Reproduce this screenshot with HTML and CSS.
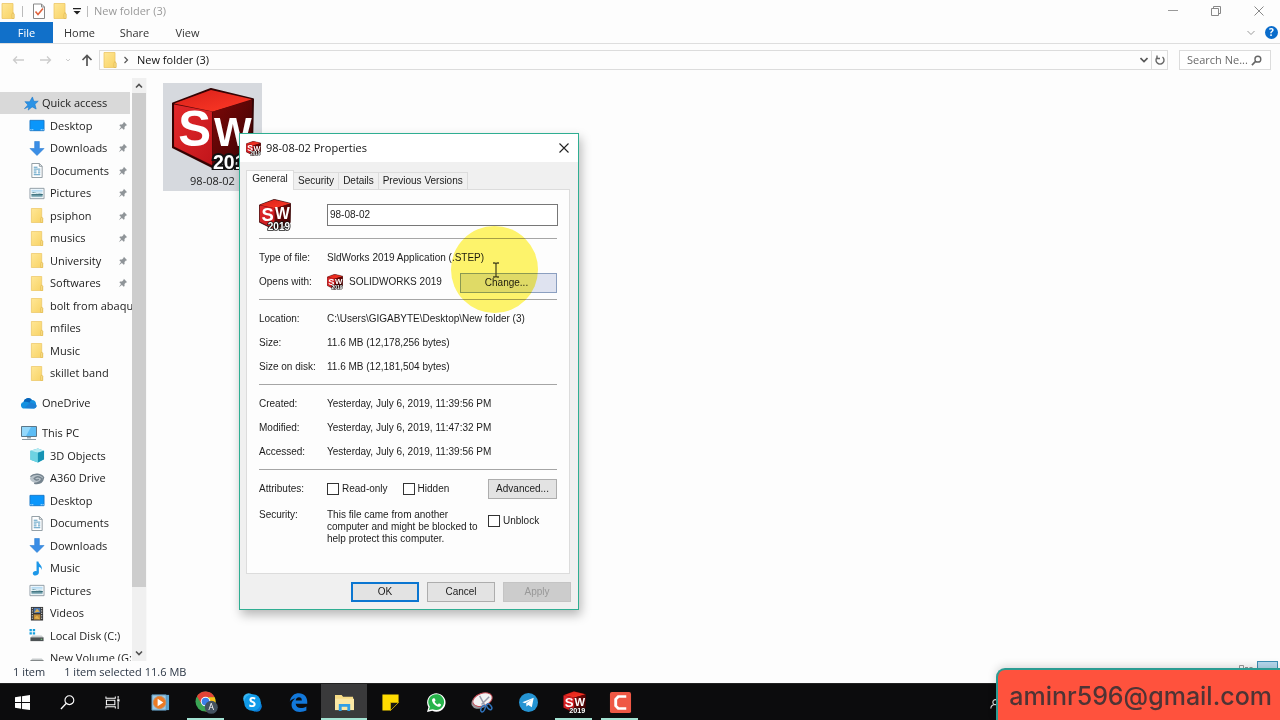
FILE: index.html
```html
<!DOCTYPE html>
<html lang="en">
<head>
<meta charset="utf-8">
<title>New folder (3)</title>
<link rel="stylesheet" href="styles.css">
</head>
<body>
<svg class="defs" aria-hidden="true">
  <linearGradient id="g-folder" x1="0" y1="0" x2="1" y2="1"><stop offset="0" stop-color="#ffe796"/><stop offset="1" stop-color="#f8d264"/></linearGradient>
  <linearGradient id="g-top" x1="0" y1="0" x2="1" y2="1"><stop offset="0" stop-color="#d8201a"/><stop offset="1" stop-color="#ff3a26"/></linearGradient>
  <linearGradient id="g-left" x1="0" y1="0" x2="1" y2="1"><stop offset="0" stop-color="#e3292b"/><stop offset="1" stop-color="#c1151b"/></linearGradient>
  <linearGradient id="g-right" x1="0" y1="0" x2="1" y2="1"><stop offset="0" stop-color="#7c0808"/><stop offset="1" stop-color="#3c0303"/></linearGradient>
  <linearGradient id="g-photo" x1="0" y1="0" x2="0" y2="1"><stop offset="0" stop-color="#a9d5f3"/><stop offset=".5" stop-color="#e6f3f6"/><stop offset=".55" stop-color="#2f6672"/><stop offset="1" stop-color="#a8cbd6"/></linearGradient>
  <symbol id="folder" viewBox="0 0 16 16"><path d="M2 .5h11v9.500l1 1v4.500H2z" fill="url(#g-folder)" stroke="#ecc766" stroke-width=".8"/><path d="M12 15.500v-4.500l1-1.500 1 1.500v4.500z" fill="#fbe08b" stroke="#e0b850" stroke-width=".7"/></symbol>
  <symbol id="star" viewBox="0 0 16 16"><path d="M9.500 1l1.600 4.700 4.600-.2-3.500 3.400 1.300 5-4.300-2.300L5 15l.6-3.500L1 13.500l3.600-4L1.500 6l5 .2z" fill="#2b93e6" stroke="#1c78c8" stroke-width=".6"/></symbol>
  <symbol id="desktop" viewBox="0 0 16 16"><path d="M.5 2.500h15v11H.5z" fill="#0a96fb" stroke="#1677c9"/><path d="M1 12.500h14" stroke="#fff" stroke-dasharray="1 1 1 8 1 1"/></symbol>
  <symbol id="down" viewBox="0 0 16 16"><path d="M5.500.5h5v7.500h5L8 15.500.5 8h5z" fill="#3b8ee6" stroke="#2679cf" stroke-width=".6"/></symbol>
  <symbol id="doc" viewBox="0 0 16 16"><path d="M2.500.5h8l3 3v12h-11z" fill="#fff" stroke="#8c989f"/><path d="M10.500.5v3h3" fill="none" stroke="#8c989f"/><path d="M4.500 4.500h4M4.500 6.500h7M4.500 8.500h3m1.500 0h2.500M4.500 10.500h3m1.500 0h2.500M4.500 12.500h7" stroke="#4b94bd"/></symbol>
  <symbol id="pic" viewBox="0 0 16 16"><path d="M.5 2.500h15v11H.5z" fill="#fff" stroke="#8d9aa3"/><path d="M2 4h12v8H2z" fill="url(#g-photo)"/><path d="M2 7c3-.5 6 1 12 2.500v-1L9 8 4 6.500z" fill="#2d6472"/></symbol>
  <symbol id="cloud" viewBox="0 0 16 16"><path d="M3.500 13.500A3.300 3.300 0 0 1 2.500 7 4.800 4.800 0 0 1 11 5a4 4 0 0 1 4 4.500 2.500 2.500 0 0 1-2 4z" fill="#1491e0"/><path d="M2.500 7A4.800 4.800 0 0 1 11 5c-1.500.5-2 1.500-2.500 2.800C6.500 6.500 4.500 6.500 2.500 7z" fill="#0a64b8"/><path d="M15 9.500l-6-2-5.500 5.500 9.500.5a2.500 2.500 0 0 0 2-4z" fill="#1d7fd4"/></symbol>
  <symbol id="pc" viewBox="0 0 16 16"><path d="M.5 1.500h15v10H.5z" fill="#5dbdf5" stroke="#5c7788"/><path d="M1 2h9L5 11H1z" fill="#94d8fb"/><path d="M6 12h4v1.500H6z" fill="#9cabb3"/><path d="M1 14.500h14" stroke="#8898a1"/></symbol>
  <symbol id="cube" viewBox="0 0 16 16"><path d="M1 3l8-2.500L15.500 3v9L9 15.500 1 12.500z" fill="#35b5cf"/><path d="M1 3l8 2v10.500L1 12.500z" fill="#6dd3e2"/><path d="M1 3l8-2.500L15.500 3 9 5z" fill="#b6ebf2"/><path d="M9 5l6.500-2v9L9 15.500z" fill="#1593b4"/></symbol>
  <symbol id="a360" viewBox="0 0 16 16"><ellipse cx="7.500" cy="8" rx="7" ry="4.500" fill="#b8c2c9"/><path d="M1 6c4-4 12-3 14 1-1 5-5 7-10 6 4 0 8-2 8-5-3-3-6-2-8 0 1 2 3 2 5 1" fill="none" stroke="#74838e" stroke-width="1.500"/></symbol>
  <symbol id="music" viewBox="0 0 16 16"><path d="M7.500.5h2c.5 3 4.500 4 3.500 9-.5-2-1.500-3-3-3v6c-.5 3.800-6.500 3.800-6.500.8 0-2 2-3 4-2.500z" fill="#1d97e8"/></symbol>
  <symbol id="video" viewBox="0 0 16 16"><path d="M1.500 1h13v14.500h-13z" fill="#373737"/><path d="M3 2v13M13 2v13" stroke="#e9e9e9" stroke-dasharray="1.300 1.300"/><path d="M4.500 2h7v5.500h-7z" fill="#4d76ad"/><path d="M4.500 9h7v5.500h-7z" fill="#c48e37"/><path d="M5 7l3-4 3 3zM5 13l3-3 3 4z" fill="#e4b24e"/></symbol>
  <symbol id="disk" viewBox="0 0 16 16"><path d="M0 1h2.500v2.500H0zM3.500 1H6v2.500H3.500zM0 4.500h2.500V7H0zM3.500 4.500H6V7H3.500z" fill="#16a0df"/><path d="M3 8h10l2 2H1z" fill="#c8cccd"/><path d="M1 10h14v4H1z" fill="#4c5254"/><path d="M12 11.500h1.500v1H12z" fill="#85df8b"/></symbol>
  <symbol id="pin" viewBox="0 0 12 12"><path d="M7 1l4 4-1.500.4-1.700 1.800.1 2.300-1.100.9L1.600 5.200l.9-1.100 2.300.1 1.800-1.700zM3.600 7.300l1.100 1.100L1 11z" fill="#8f9498"/></symbol>
  <symbol id="box" viewBox="0 0 80 80">
    <path d="M1 15L38 1l41 10-1 48-39 18-38-19z" fill="#580606" stroke="#330303" stroke-width="2" stroke-linejoin="round"/>
    <path d="M2 15L38 2l40 9-38 12z" fill="url(#g-top)"/><path d="M2 16l37 7v52L2 57z" fill="url(#g-left)"/><path d="M40 23l38-11-1 47-37 16z" fill="url(#g-right)"/>
  </symbol>
  <symbol id="sw" viewBox="0 0 80 80"><use href="#box" width="80" height="80"/><text x="6" y="54" class="sw-s">S</text><text x="40" y="51" class="sw-w">W</text><text x="22" y="77" class="sw-year">2019</text></symbol>
</svg>

<div class="window">
  <header>
    <div class="titlebar">
      <svg class="i16"><use href="#folder"/></svg><span class="sep"></span>
      <svg class="i16" viewBox="0 0 16 16"><path d="M2.500 1h8l3 3v11.500h-11z" fill="#fff" stroke="#888"/><path d="M10.500 1v3h3" fill="none" stroke="#888"/><path d="M4.500 8.500l2.500 3 5-6" fill="none" stroke="#e0623c" stroke-width="1.600"/></svg>
      <svg class="i16"><use href="#folder"/></svg>
      <svg class="i8" viewBox="0 0 8 8"><path d="M0 1h8v1.300H0zM.5 4h7L4 7.500z" fill="#222"/></svg><span class="sep"></span>
      <span class="title">New folder (3)</span>
      <div class="win-buttons">
        <button aria-label="Minimize"><svg viewBox="0 0 10 10"><path d="M0 4.500h10" stroke="#999"/></svg></button>
        <button aria-label="Restore"><svg viewBox="0 0 10 10"><path d="M.5 2.500h7v7h-7zM2.500 2.500v-2h7v7h-2" fill="none" stroke="#888"/></svg></button>
        <button aria-label="Close"><svg viewBox="0 0 10 10"><path d="M.5.5l9 9M9.500.5l-9 9" stroke="#888"/></svg></button>
      </div>
    </div>
    <nav class="ribbon">
      <button class="file">File</button><button>Home</button><button>Share</button><button>View</button>
      <span class="help"><svg class="i8" viewBox="0 0 8 8"><path d="M.5 2L4 5.500 7.500 2" fill="none" stroke="#999"/></svg><b>?</b></span>
    </nav>
    <div class="address-row">
      <svg class="arrow" viewBox="0 0 12 12"><path d="M12 6H1.500M5 2.500L1.500 6 5 9.500" fill="none" stroke="#ccc" stroke-width="1.300"/></svg>
      <svg class="arrow" viewBox="0 0 12 12"><path d="M0 6h10.500M7 2.500L10.500 6 7 9.500" fill="none" stroke="#ccc" stroke-width="1.300"/></svg>
      <svg class="i8" viewBox="0 0 8 8"><path d="M2 3l2 2 2-2" fill="none" stroke="#ccc"/></svg>
      <svg class="arrow" viewBox="0 0 12 12"><path d="M6 12V1.500M1.500 6L6 1.500 10.500 6" fill="none" stroke="#555" stroke-width="1.700"/></svg>
      <div class="address">
        <svg class="i16"><use href="#folder"/></svg>
        <svg class="i8" viewBox="0 0 8 8"><path d="M2.500 1l3 3-3 3" fill="none" stroke="#555" stroke-width="1.200"/></svg>
        <span class="path">New folder (3)</span>
        <svg class="i8" viewBox="0 0 8 8"><path d="M.5 2L4 5.500 7.500 2" fill="none" stroke="#555" stroke-width="1.600"/></svg>
        <span class="refresh"><svg viewBox="0 0 10 10"><path d="M2.500 2A4 4 0 1 0 7.500 2M2 .5v3h3" fill="none" stroke="#666" stroke-width="1.400"/></svg></span>
      </div>
      <label class="search"><input type="text" placeholder="Search Ne..." aria-label="Search"><svg viewBox="0 0 12 12"><circle cx="7.500" cy="4.500" r="3.200" fill="none" stroke="#666" stroke-width="1.500"/><path d="M5 7L1 11" stroke="#666" stroke-width="1.800"/></svg></label>
    </div>
  </header>

  <main>
    <aside>
      <div class="tree">
        <ul>
          <li class="root quick"><svg class="i14"><use href="#star"/></svg>Quick access</li>
          <li><svg class="i14"><use href="#desktop"/></svg>Desktop<svg class="pin"><use href="#pin"/></svg></li>
          <li><svg class="i14"><use href="#down"/></svg>Downloads<svg class="pin"><use href="#pin"/></svg></li>
          <li><svg class="i14"><use href="#doc"/></svg>Documents<svg class="pin"><use href="#pin"/></svg></li>
          <li><svg class="i14"><use href="#pic"/></svg>Pictures<svg class="pin"><use href="#pin"/></svg></li>
          <li><svg class="i14"><use href="#folder"/></svg>psiphon<svg class="pin"><use href="#pin"/></svg></li>
          <li><svg class="i14"><use href="#folder"/></svg>musics<svg class="pin"><use href="#pin"/></svg></li>
          <li><svg class="i14"><use href="#folder"/></svg>University<svg class="pin"><use href="#pin"/></svg></li>
          <li><svg class="i14"><use href="#folder"/></svg>Softwares<svg class="pin"><use href="#pin"/></svg></li>
          <li><svg class="i14"><use href="#folder"/></svg>bolt from abaqu</li>
          <li><svg class="i14"><use href="#folder"/></svg>mfiles</li>
          <li><svg class="i14"><use href="#folder"/></svg>Music</li>
          <li><svg class="i14"><use href="#folder"/></svg>skillet band</li>
        </ul>
        <ul><li class="root"><svg class="i16"><use href="#cloud"/></svg>OneDrive</li></ul>
        <ul>
          <li class="root"><svg class="i16"><use href="#pc"/></svg>This PC</li>
          <li><svg class="i14"><use href="#cube"/></svg>3D Objects</li>
          <li><svg class="i14"><use href="#a360"/></svg>A360 Drive</li>
          <li><svg class="i14"><use href="#desktop"/></svg>Desktop</li>
          <li><svg class="i14"><use href="#doc"/></svg>Documents</li>
          <li><svg class="i14"><use href="#down"/></svg>Downloads</li>
          <li><svg class="i14"><use href="#music"/></svg>Music</li>
          <li><svg class="i14"><use href="#pic"/></svg>Pictures</li>
          <li><svg class="i14"><use href="#video"/></svg>Videos</li>
          <li><svg class="i14"><use href="#disk"/></svg>Local Disk (C:)</li>
          <li><svg class="i14" viewBox="0 0 16 16"><path d="M3 8h10l2 2H1z" fill="#c8cccd"/><path d="M1 10h14v4H1z" fill="#4c5254"/></svg>New Volume (G:</li>
        </ul>
      </div>
      <div class="scrollbar">
        <svg viewBox="0 0 14 14"><path d="M4 9l3-3 3 3" fill="none" stroke="#505050" stroke-width="1.600"/></svg>
        <span class="thumb"></span>
        <svg viewBox="0 0 14 14"><path d="M4 5l3 3 3-3" fill="none" stroke="#505050" stroke-width="1.600"/></svg>
      </div>
    </aside>
    <section class="files">
      <figure class="file-item"><svg viewBox="0 0 80 80"><use href="#box" width="80" height="80"/><text x="6" y="57" class="sw-s big-s">S</text><text x="41" y="57" class="sw-w">W</text><text x="40" y="79" class="sw-year big-year">2019</text></svg><figcaption>98-08-02</figcaption></figure>
    </section>
  </main>

  <footer class="status">
    <span>1 item</span><span>1 item selected</span><span>11.6 MB</span>
    <div class="views"><svg viewBox="0 0 14 8"><path d="M.5.500h4v4h-4zM6 2.500h3M10.500 2.500h3" fill="none" stroke="#999"/></svg><i></i></div>
  </footer>
</div>

<div class="dialog" role="dialog" aria-labelledby="dlg-title">
  <div class="dlg-title"><svg><use href="#sw"/></svg><span id="dlg-title">98-08-02 Properties</span><button aria-label="Close"><svg viewBox="0 0 10 10"><path d="M.5.5l9 9M9.500.5l-9 9" stroke="#222" stroke-width="1.100"/></svg></button></div>
  <div class="dlg-body">
    <div class="tabs"><button class="on">General</button><button>Security</button><button>Details</button><button>Previous Versions</button></div>
    <div class="panel">
      <div class="name-row"><svg><use href="#sw"/></svg><input type="text" value="98-08-02" aria-label="File name"></div>
      <dl>
        <dt>Type of file:</dt><dd>SldWorks 2019 Application (.STEP)</dd>
        <dt>Opens with:</dt><dd><svg><use href="#sw"/></svg>SOLIDWORKS 2019<button class="change">Change...</button></dd>
      </dl>
      <dl>
        <dt>Location:</dt><dd>C:\Users\GIGABYTE\Desktop\New folder (3)</dd>
        <dt>Size:</dt><dd>11.6 MB (12,178,256 bytes)</dd>
        <dt>Size on disk:</dt><dd>11.6 MB (12,181,504 bytes)</dd>
      </dl>
      <dl>
        <dt>Created:</dt><dd>Yesterday, July 6, 2019, 11:39:56 PM</dd>
        <dt>Modified:</dt><dd>Yesterday, July 6, 2019, 11:47:32 PM</dd>
        <dt>Accessed:</dt><dd>Yesterday, July 6, 2019, 11:39:56 PM</dd>
      </dl>
      <dl>
        <dt>Attributes:</dt><dd class="attrs"><label><input type="checkbox">Read-only</label><label><input type="checkbox">Hidden</label><button>Advanced...</button></dd>
        <dt class="sec">Security:</dt><dd class="sec"><p>This file came from another computer and might be blocked to help protect this computer.</p><label><input type="checkbox">Unblock</label></dd>
      </dl>
    </div>
    <div class="actions"><button class="ok">OK</button><button>Cancel</button><button disabled>Apply</button></div>
  </div>
  <div class="halo"></div>
  <svg class="caret" viewBox="0 0 8 16"><path d="M1 1h2l1 1 1-1h2M4 2v12M1 15h2l1-1 1 1h2" fill="none" stroke="#4d4b20" stroke-width="1.300"/></svg>
</div>

<nav class="taskbar">
  <button class="sys" aria-label="Start"><svg viewBox="0 0 16 16"><path d="M0 2.300l6.500-1v6.200H0zM7.500 1.200L16 0v7.500H7.500zM0 8.500h6.500v6.200l-6.500-1zM7.500 8.500H16V16l-8.500-1.200z" fill="#fff"/></svg></button>
  <button class="sys" aria-label="Search"><svg viewBox="0 0 16 16"><circle cx="10" cy="5.500" r="4.700" fill="none" stroke="#fff" stroke-width="1.200"/><path d="M6.500 9L1 15" stroke="#fff" stroke-width="1.400"/></svg></button>
  <button class="sys" aria-label="Task view"><svg viewBox="0 0 16 16"><path d="M1 1.500v2h10v-2M1 14.500v-2h10v2M1.500 5.500h9v5h-9zM14 1v3M14 7.500V15" fill="none" stroke="#fff" stroke-width="1.100"/><path d="M13 4.500h2.500V7H13z" fill="#fff"/></svg></button>
  <div class="apps">
  <button aria-label="Media player"><svg viewBox="0 0 20 20"><path d="M4 2h15v16H4z" fill="#5ba3cf"/><path d="M1 2h15v16H1z" fill="#9cc9e4" stroke="#5c93b6"/><circle cx="9" cy="10" r="6.500" fill="#ee7a22" stroke="#c98d5f"/><path d="M7 6l6 4-6 4z" fill="#fff"/></svg></button>
  <button class="open" aria-label="Chrome"><svg class="big" viewBox="0 0 24 24"><circle cx="11" cy="11" r="10.500" fill="#3ba554"/><path d="M2 5.500A10.500 10.500 0 0 1 20.500 6.500H11L6.500 13z" fill="#e34335"/><path d="M20.500 6.500A10.500 10.500 0 0 1 11 21.500L15 13l-1-6.500z" fill="#fbc116"/><circle cx="11" cy="11" r="5" fill="#fff"/><circle cx="11" cy="11" r="4" fill="#3b7fe8"/><circle cx="17" cy="17" r="6.800" fill="#435260"/><text x="17" y="20" class="avatar">A</text></svg></button>
  <button aria-label="Skype"><svg viewBox="0 0 20 20"><circle cx="6" cy="6" r="5.800" fill="#36b5f2"/><circle cx="14" cy="14" r="5.800" fill="#0a7dd8"/><circle cx="10" cy="10" r="8.800" fill="#109be9"/><text x="10" y="15" class="skype">S</text></svg></button>
  <button aria-label="Edge"><svg viewBox="0 0 20 20"><path d="M.8 9C2 3 5.800.3 10.500.3 16 .3 19.200 4.500 19.200 9v2.300H7c.2 3 2.600 4.500 5.500 4.500 2 0 4-.5 5.800-1.600v4.200c-2 1-4.200 1.500-6.800 1.500C6 19.900 2.500 16.500 2.700 12c.1-2.800 1.700-5 4-6.200C4 6 2 7.200.8 9zm6.300-1.200h6.400c0-2-1-3.200-3-3.200S7.300 6 7.100 7.800z" fill="#1278da"/></svg></button>
  <button class="open active" aria-label="File Explorer"><svg viewBox="0 0 20 20"><path d="M0 2h7l1.500 2H19v14H0z" fill="#f7dc85"/><path d="M0 6h20v12H0z" fill="#fbe8a4"/><path d="M4 19v-7.500h12V19h-3v-4.500H7V19z" fill="#31a0e5"/></svg></button>
  <button aria-label="Sticky Notes"><svg viewBox="0 0 20 20"><path d="M1.500 1.500h17V10L10 18.500H1.500z" fill="#ffdb00"/><path d="M10 10h8.500L10 18.500z" fill="#1a1a12" stroke="#e5c300" stroke-width=".7"/></svg></button>
  <button aria-label="WhatsApp"><svg viewBox="0 0 20 20"><path d="M0 20l1.500-5A9.700 9.700 0 1 1 5.500 18.700z" fill="#fff"/><path d="M2 18l1-3.500A8.300 8.300 0 1 1 6 17z" fill="#27b44b"/><path d="M6.500 5.500l1.800.2.700 2.200-1 1.300c1 1.600 2 2.500 3.400 3l1.200-1.400 2.200 1.200c0 2.200-2 2.700-3.800 2.200C7.500 13 5.500 10 5.300 8c0-1.300.5-2 1.200-2.500z" fill="#fff"/></svg></button>
  <button aria-label="Snipping Tool"><svg class="big" viewBox="0 0 24 22"><ellipse cx="10" cy="10" rx="10" ry="7" transform="rotate(-25 10 10)" fill="#98999c"/><ellipse cx="12" cy="8" rx="10.500" ry="6.500" transform="rotate(-20 12 8)" fill="#f3f3f3" stroke="#c34a54"/><path d="M9 4l6 11M19 5l-8 8" stroke="#99a" stroke-width="1.500"/><ellipse cx="12.500" cy="17.500" rx="2" ry="3.500" transform="rotate(25 12.500 17.500)" fill="none" stroke="#2f72ba" stroke-width="1.500"/><ellipse cx="19" cy="15.500" rx="2" ry="3.500" transform="rotate(-40 19 15.500)" fill="none" stroke="#2f72ba" stroke-width="1.500"/></svg></button>
  <button aria-label="Telegram"><svg viewBox="0 0 20 20"><circle cx="10" cy="10" r="10" fill="#2594d3"/><path d="M3.500 9.700L15.500 5l-2 10-3.700-2.500-2 1.800-.2-3.500 6-4.200-7.300 4.200z" fill="#fff"/></svg></button>
  <button class="open" aria-label="SolidWorks"><svg class="big"><use href="#sw"/></svg></button>
  <button class="open" aria-label="Camtasia"><svg class="big" viewBox="0 0 24 24"><rect x="1" y="1" width="22" height="22" rx="2" fill="#ef5845"/><path d="M18 4.500H9L5.500 8v8L9 19.500h9V17H10.500L8.500 15V9l2-2H18z" fill="#fff"/></svg></button>
  </div>
  <svg class="tray" viewBox="0 0 12 12"><circle cx="7" cy="4" r="2.800" fill="none" stroke="#ddd" stroke-width="1.200"/><path d="M2 11c0-3 2-4.500 5-4.500s5 1.500 5 4.500" fill="none" stroke="#ddd" stroke-width="1.200"/></svg>
</nav>
<div class="banner">aminr596@gmail.com</div>
</body>
</html>
```
FILE: styles.css
```css
* { box-sizing: border-box; }
body { margin: 0; height: 100vh; display: flex; flex-direction: column; overflow: hidden; position: relative; background: #fdfdfd; color: #1c1c1c; font: 12px/16px "Open Sans", "Noto Sans", sans-serif; }
button { font: inherit; color: inherit; border: 0; background: none; padding: 0; }
svg { display: block; flex: none; }
.defs { position: absolute; width: 0; height: 0; }
ul, dl, dd, figure, p { margin: 0; padding: 0; }
.i16 { width: 16px; height: 16px; }
.i14 { width: 16px; height: 15px; }
.i8 { width: 8px; height: 8px; }
.window { flex: 1; min-height: 0; display: flex; flex-direction: column; font-size: 11px; }

.titlebar { display: flex; align-items: center; height: 22px; }
.titlebar > .i16 + .i16 { margin-left: 5px; }
.titlebar > .i8 { margin-left: 5px; }
.sep { width: 1px; height: 11px; background: #bbb; margin: 0 8px 0 6px; }
.titlebar .i8 + .sep { margin: 0 6px; }
.title { color: #999; }
.win-buttons { margin-left: auto; display: flex; }
.win-buttons button { width: 43px; height: 20px; display: grid; place-items: center; }
.win-buttons svg { width: 10px; height: 10px; }

.ribbon { display: flex; height: 22px; border-bottom: 1px solid #dedede; }
.ribbon button { width: 55px; color: #333; }
.ribbon .file { width: 53px; margin-right: -1px; background: #1170c9; color: #fff; }
.ribbon button:nth-child(n+4) { width: 51px; }
.help { margin-left: auto; display: flex; align-items: center; gap: 10px; margin-right: 2px; }
.help b { width: 13px; height: 13px; border-radius: 50%; background: #0a6ccb; color: #fff; font-size: 10px; line-height: 13px; text-align: center; }

.address-row { display: flex; align-items: center; height: 34px; padding: 0 9px 2px 12px; }
.arrow { width: 12px; height: 12px; }
.arrow + .arrow { margin-left: 16px; }
.arrow + .i8 { margin: 0 9px 0 12px; }
.i8 + .arrow { margin-right: 6px; }
.address { flex: 1; display: flex; align-items: center; height: 20px; border: 1px solid #dcdcdc; padding-left: 2px; margin-right: 11px; }
.address > .i8 { margin: 0 7px 0 4px; }
.path { flex: 1; color: #111; }
.refresh { width: 16px; height: 18px; border-left: 1px solid #dcdcdc; display: grid; place-items: center; }
.address > .path + .i8 { margin-right: 3px; }
.refresh svg { width: 10px; height: 10px; }
.search { display: flex; align-items: center; width: 92px; height: 20px; border: 1px solid #dcdcdc; padding: 0 8px 0 7px; background: #fff; }
.search input { flex: 1; min-width: 0; border: 0; padding: 0; background: none; font: inherit; outline: 0; }
.search input::placeholder { color: #6a6a6a; opacity: 1; }
.search svg { width: 11px; height: 11px; }

main { flex: 1; min-height: 0; display: flex; }
aside { display: flex; width: 147px; }
.tree { flex: 1; min-width: 0; padding-top: 14px; overflow: hidden; display: flex; flex-direction: column; gap: 8px; }
ul { list-style: none; }
li { display: flex; align-items: center; gap: 5px; height: 22px; margin-right: 2px; padding: 0 2px 0 29px; white-space: nowrap; }
li:nth-child(even) { height: 23px; }
.root { padding-left: 21px; }
.quick { padding-left: 23px; gap: 3px; background: #d9d9d9; }
.pin { width: 10px; height: 10px; margin-left: auto; }
.scrollbar { width: 15px; background: #f0f0f0; display: flex; flex-direction: column; border-right: 1px solid #f8f8f8; }
.scrollbar svg { width: 14px; height: 15px; }
.thumb { height: 494px; margin-bottom: auto; background: #cdcdcd; }
.files { flex: 1; padding: 5px 16px; }
.file-item { width: 99px; height: 108px; background: #d6d9de; display: flex; flex-direction: column; align-items: center; padding-top: 5px; }
.file-item svg { width: 82px; height: 82px; }
figcaption { margin-top: 3px; }

.status { height: 22px; display: flex; align-items: center; padding-left: 13px; color: #2b3645; }
.status span:nth-child(2) { margin: 0 3px 0 19px; }
.views { margin-left: auto; align-self: flex-start; display: flex; gap: 4px; padding-right: 2px; }
.views svg { width: 14px; height: 8px; margin-top: 4px; }
.views i { width: 21px; height: 18px; border: 1px solid #3d8fb5; background: #b5d9ee; }

.dialog { position: absolute; left: 239px; top: 133px; width: 340px; border: 1px solid #2fae92; background: #f0f0f0; box-shadow: 2px 5px 10px rgba(0,0,0,.28); font: 10px/12px "Liberation Sans", Arial, sans-serif; }
.dlg-title { height: 28px; display: flex; align-items: center; gap: 5px; padding: 0 9px 0 6px; background: #fff; font: 11px/16px "Open Sans", sans-serif; color: #111; }
.dlg-title > svg { width: 15px; height: 15px; }
.dlg-title button { margin-left: auto; }
.dlg-title button svg { width: 10px; height: 10px; }
.dlg-body { padding: 8px 7px 7px 6px; }
.tabs { display: flex; align-items: flex-end; height: 19px; }
.tabs button { height: 17px; border: 1px solid #dcdcdc; border-width: 1px 1px 0 0; padding: 0 4px 1px; }
.tabs .on { height: 20px; width: 48px; margin-bottom: -1px; padding: 0 4px 4px; background: #fdfdfd; border-left-width: 1px; position: relative; }
.panel { border: 1px solid #dcdcdc; background: #fdfdfd; margin-right: 1px; padding: 9px 12px 22px; }
.name-row { display: flex; align-items: center; gap: 36px; height: 39px; padding-bottom: 7px; }
.name-row svg { width: 32px; height: 32px; }
.name-row input { flex: 1; min-width: 0; height: 22px; margin-right: -1px; border: 1px solid #777; background: #fff; padding: 0 2px 2px; font: inherit; color: inherit; }
dl { display: grid; grid-template-columns: 68px 1fr; grid-auto-rows: minmax(24px, auto); align-items: center; padding: 7px 0 5px; border-top: 1px solid #a5a5a5; }
dl:last-child { padding-bottom: 6px; }
dd { display: flex; align-items: center; white-space: nowrap; }
dd svg { width: 16px; height: 16px; margin-right: 6px; }
.panel button { border: 1px solid #adadad; background: #e3e3e3; height: 20px; width: 69px; margin-left: auto; }
.panel .change { width: 97px; margin-top: 2px; border-color: #8b9fc0; background: #dfe3f0; padding-right: 4px; }
label { display: flex; align-items: center; gap: 3px; }
input[type="checkbox"] { appearance: none; width: 12px; height: 12px; margin: 0; border: 1px solid #333; background: #fff; }
.attrs { gap: 15px; }
.sec { align-self: start; padding-top: 8px; }
dd.sec { align-items: flex-start; }
dd.sec p { width: 161px; white-space: normal; }
dd.sec label { padding-top: 6px; }
.actions { display: flex; justify-content: flex-end; gap: 8px; padding-top: 8px; }
.actions button { width: 68px; height: 20px; border: 1px solid #adadad; background: #e3e3e3; }
.actions .ok { border: 2px solid #0b76d1; }
.actions button:disabled { background: #cccccc; border-color: #c4c4c4; color: #989898; }
.halo { position: absolute; left: 211px; top: 92px; width: 87px; height: 87px; border-radius: 50%; background: #fff56c; mix-blend-mode: multiply; }
.caret { position: absolute; left: 252px; top: 128px; width: 8px; height: 16px; }

.taskbar { height: 37px; display: flex; background: #0c0c0d; position: relative; border-top: 1px solid #222; }
.apps { display: flex; margin-left: 2px; }
.taskbar button { width: 46px; display: grid; place-items: center; position: relative; }
.taskbar .sys { width: 45px; }
.taskbar svg { width: 19px; height: 19px; }
.taskbar .sys svg { width: 15px; height: 15px; }
.taskbar svg.big { width: 23px; height: 23px; }
.taskbar .open::after { content: ""; position: absolute; left: 4px; right: 5px; bottom: 0; height: 2px; background: #a3e2d2; }
.taskbar .active { background: #3a3a3b; }
.taskbar .active::after { left: 0; right: 0; }
.taskbar .tray { position: absolute; right: 280px; top: 14px; width: 11px; height: 12px; }
.banner { position: absolute; right: 0; bottom: 0; height: 52px; padding: 0 8px 0 11px; border: 2px solid #2b9c93; border-width: 2px 0 0 2px; border-top-left-radius: 9px; background: #ff523d; color: #4e3435; font: 500 25px/52px Inter, "Open Sans", sans-serif; box-shadow: 0 -2px 8px rgba(0,0,0,.15); }

.sw-s, .sw-w { font: bold 46px "Liberation Sans", Arial, sans-serif; fill: #fff; }
.sw-w { font-size: 39px; }
.big-s { font-size: 48px; }
.sw-year { font: bold 25px "Liberation Sans", Arial, sans-serif; fill: #fff; stroke: #111; stroke-width: 4px; paint-order: stroke; }
.big-year { font-size: 19px; }
.avatar { font: 9px "Open Sans", sans-serif; fill: #fff; text-anchor: middle; }
.skype { font: bold 14px "Open Sans", sans-serif; fill: #fff; text-anchor: middle; }
```
